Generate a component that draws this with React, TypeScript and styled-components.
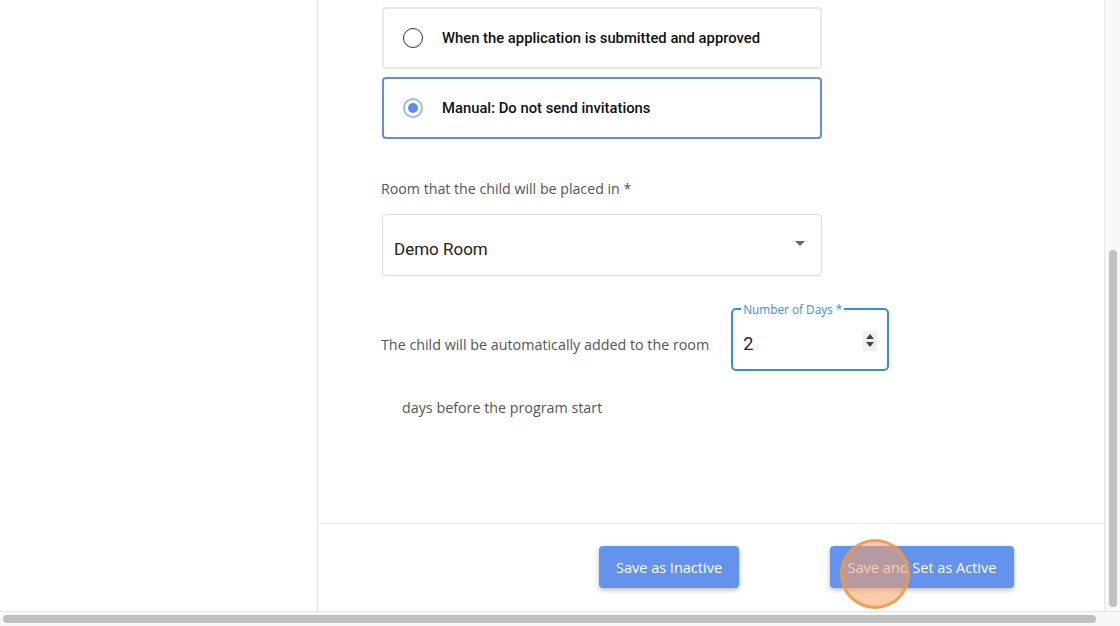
import React from "react";
import styled, { createGlobalStyle } from "styled-components";

const Global = createGlobalStyle`
  html, body { margin: 0; padding: 0; background: #fff; overflow: hidden; }
  #root { width: 1120px; height: 626px; }
`;

const Page = styled.div`
  width: 1120px;
  height: 626px;
  display: flex;
  flex-direction: column;
  background: #fff;
`;

const Body = styled.div`
  display: flex;
  height: 611px;
  border-bottom: 1px solid #e6e6e6;
`;

const Sidebar = styled.aside`
  width: 317px;
  border-right: 1px solid #e3e3e3;
  background: #fff;
`;

const Main = styled.main`
  width: 786px;
  border-right: 1px solid #e6e6e6;
  display: flex;
  flex-direction: column;
`;

const Form = styled.div`
  height: 524px;
  box-sizing: border-box;
  padding: 7px 0 0 64px;
  display: flex;
  flex-direction: column;
  border-bottom: 1px solid #ebebeb;
`;

const Options = styled.div`
  display: flex;
  flex-direction: column;
  gap: 8px;
  width: 440px;
`;

const OptionCard = styled.label<{ $selected?: boolean }>`
  height: 62px;
  box-sizing: border-box;
  display: flex;
  align-items: center;
  gap: 19px;
  padding-left: 19px;
  border-radius: 4px;
  border: 2px solid ${(p) => (p.$selected ? "#5f8ee9" : "#e8e8e8")};
  font-family: Roboto, "Liberation Sans", sans-serif;
  font-weight: 500;
  font-size: 14.8px;
  color: #111;
`;

const Radio = styled.span<{ $checked?: boolean }>`
  width: 20px;
  height: 20px;
  box-sizing: border-box;
  border-radius: 50%;
  border: ${(p) => (p.$checked ? "2px solid #9bb8f0" : "1.5px solid #333")};
  display: flex;
  align-items: center;
  justify-content: center;
  &::after {
    content: "";
    display: ${(p) => (p.$checked ? "block" : "none")};
    width: 10px;
    height: 10px;
    border-radius: 50%;
    background: #5b8ded;
  }
`;

const FieldLabel = styled.div`
  margin-top: 40px;
  font-family: "Open Sans", "Liberation Sans", sans-serif;
  font-size: 14.2px;
  color: #555;
  height: 20px;
  line-height: 20px;
  margin-left: -1px;
`;

const Select = styled.div`
  margin-top: 15px;
  width: 440px;
  height: 62px;
  box-sizing: border-box;
  border: 1px solid #dcdcdc;
  border-radius: 4px;
  display: flex;
  align-items: center;
  justify-content: space-between;
  padding: 8px 16px 0 11px;
  font-family: Roboto, "Liberation Sans", sans-serif;
  font-size: 17px;
  color: #222;
`;

const Caret = styled.span`
  width: 0;
  height: 0;
  border-left: 5px solid transparent;
  border-right: 5px solid transparent;
  border-top: 5px solid #666;
  margin-top: -12px;
`;

const DaysRow = styled.div`
  margin-top: 26px;
  display: flex;
  align-items: flex-start;
  gap: 22px;
`;

const Sentence = styled.span<{ $indent?: number; $top?: number }>`
  font-family: "Open Sans", "Liberation Sans", sans-serif;
  font-size: 14.3px;
  line-height: 20px;
  color: #555;
  margin-left: ${(p) => p.$indent ?? -1}px;
  margin-top: ${(p) => p.$top ?? 0}px;
`;

const NumberField = styled.fieldset`
  margin: 0;
  width: 158px;
  height: 69px;
  box-sizing: border-box;
  border: 2px solid #3590d8;
  border-radius: 5px;
  padding: 0 10px;
  display: flex;
  align-items: center;
  justify-content: space-between;
`;

const Legend = styled.legend`
  font-family: "Open Sans", "Liberation Sans", sans-serif;
  font-size: 11.8px;
  color: #3a8fd6;
  padding: 0 2px;
  margin-left: -2px;
  line-height: 14px;
`;

const Value = styled.span`
  font-family: Roboto, "Liberation Sans", sans-serif;
  font-size: 18px;
  color: #222;
  margin-top: 2px;
`;

const Spinner = styled.span`
  width: 14px;
  height: 20px;
  background: #f0f0f0;
  display: flex;
  flex-direction: column;
  align-items: center;
  justify-content: center;
  gap: 3px;
  margin-top: -4px;
`;

const Tri = styled.span<{ $down?: boolean }>`
  width: 0;
  height: 0;
  border-left: 4px solid transparent;
  border-right: 4px solid transparent;
  ${(p) => (p.$down ? "border-top: 5px solid #444;" : "border-bottom: 5px solid #444;")}
`;

const Footer = styled.div`
  flex: 1;
  display: flex;
  align-items: flex-start;
  justify-content: flex-end;
  gap: 91px;
  padding: 22px 90px 0 0;
`;

const Button = styled.button<{ $w: number }>`
  width: ${(p) => p.$w}px;
  height: 42px;
  border: none;
  border-radius: 4px;
  background: #6493ee;
  color: #fff;
  font-family: "Open Sans", "Liberation Sans", sans-serif;
  font-size: 14.5px;
  box-shadow: 0 2px 5px rgba(0, 0, 0, 0.28);
  position: relative;
  padding: 0;
`;

const ClickMark = styled.span`
  position: absolute;
  left: 10px;
  top: -7px;
  width: 70px;
  height: 70px;
  border-radius: 50%;
  background: rgba(250, 160, 100, 0.55);
  border: 3px solid rgba(240, 150, 70, 0.85);
  box-sizing: border-box;
`;

const VScroll = styled.div`
  flex: 1;
  background: #f8f8f8;
  display: flex;
  flex-direction: column;
  justify-content: flex-end;
  align-items: center;
  padding-bottom: 4px;
`;

const VThumb = styled.div`
  width: 8px;
  height: 357px;
  border-radius: 4px;
  background: #c1c1c1;
`;

const HScroll = styled.div`
  flex: 1;
  background: #f8f8f8;
  display: flex;
  align-items: center;
  padding-left: 3px;
`;

const HThumb = styled.div`
  width: 1093px;
  height: 8px;
  border-radius: 4px;
  background: #c1c1c1;
`;

export default function App() {
  return (
    <>
      <Global />
      <Page>
        <Body>
          <Sidebar />
          <Main>
            <Form>
              <Options>
                <OptionCard>
                  <Radio />
                  When the application is submitted and approved
                </OptionCard>
                <OptionCard $selected>
                  <Radio $checked />
                  Manual: Do not send invitations
                </OptionCard>
              </Options>
              <FieldLabel>Room that the child will be placed in *</FieldLabel>
              <Select>
                <span>Demo Room</span>
                <Caret />
              </Select>
              <DaysRow>
                <Sentence $top={33}>The child will be automatically added to the room</Sentence>
                <NumberField>
                  <Legend>Number of Days *</Legend>
                  <Value>2</Value>
                  <Spinner>
                    <Tri />
                    <Tri $down />
                  </Spinner>
                </NumberField>
              </DaysRow>
              <Sentence $indent={20} $top={27}>
                days before the program start
              </Sentence>
            </Form>
            <Footer>
              <Button $w={140}>Save as Inactive</Button>
              <Button $w={184}>
                Save and Set as Active
                <ClickMark />
              </Button>
            </Footer>
          </Main>
          <VScroll>
            <VThumb />
          </VScroll>
        </Body>
        <HScroll>
          <HThumb />
        </HScroll>
      </Page>
    </>
  );
}
